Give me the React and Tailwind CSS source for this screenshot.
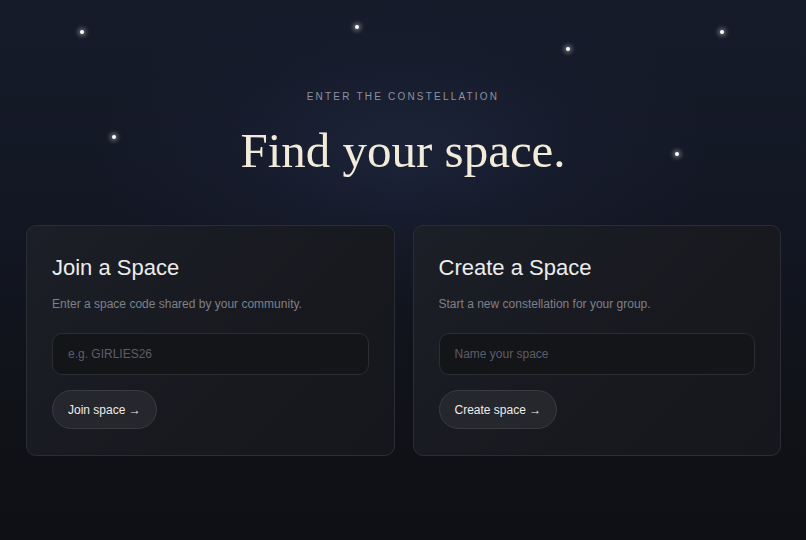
import React from "react";

const stars = [
  { x: 82, y: 32 },
  { x: 357, y: 27 },
  { x: 568, y: 49 },
  { x: 722, y: 32 },
  { x: 114, y: 137 },
  { x: 677, y: 154 },
];

function Card({ title, sub, placeholder, button }) {
  return (
    <div className="flex-1 rounded-[10px] border border-[#2a2d34] bg-[linear-gradient(135deg,#1c1f27_0%,#18191f_60%,#16171c_100%)] px-[25px] pt-[28px] pb-[26px]">
      <h2 className="text-[22px] leading-[28px] text-[#ececec] font-['Liberation_Sans',Arial,sans-serif]">
        {title}
      </h2>
      <p className="mt-[12px] text-[12px] leading-[20px] text-[#7d808a]">{sub}</p>
      <input
        className="mt-[19px] block h-[42px] w-full rounded-[10px] border border-[#2b2d33] bg-[#141519] px-[15px] text-[12px] text-[#ddd] placeholder:text-[#5b5e67] outline-none"
        placeholder={placeholder}
      />
      <button className="mt-[15px] h-[39px] rounded-full border border-[#3a3b41] bg-[#26272c] px-[15px] text-[12px] text-[#ececec]">
        {button} →
      </button>
    </div>
  );
}

export default function App() {
  return (
    <div className="relative min-h-[540px] w-full overflow-hidden bg-[linear-gradient(180deg,#151b29_0%,#131724_40%,#101218_75%,#0e1015_100%)] font-['Liberation_Sans',Arial,sans-serif]">
      <div className="pointer-events-none absolute left-1/2 top-[150px] h-[300px] w-[600px] -translate-x-1/2 -translate-y-1/2 rounded-full bg-[radial-gradient(ellipse_at_center,rgba(40,52,85,0.4)_0%,rgba(30,38,62,0.18)_45%,rgba(0,0,0,0)_75%)]" />
      {stars.map((s, i) => (
        <div
          key={i}
          className="absolute h-[4px] w-[4px] -translate-x-1/2 -translate-y-1/2 rounded-full bg-white shadow-[0_0_4px_2px_rgba(255,255,255,0.35)]"
          style={{ left: s.x, top: s.y }}
        />
      ))}
      <div className="relative flex flex-col items-center pt-[89px]">
        <div className="text-[10px] leading-4 tracking-[0.22em] text-[#8c92a1]">
          ENTER THE CONSTELLATION
        </div>
        <h1 className="mt-[16px] text-[49px] leading-[60px] text-[#f3ebd9] font-['Liberation_Serif','Times_New_Roman',serif]">
          Find your space.
        </h1>
      </div>
      <div className="relative mt-[44px] flex gap-[18px] pl-[26px] pr-[25px]">
        <Card
          title="Join a Space"
          sub="Enter a space code shared by your community."
          placeholder="e.g. GIRLIES26"
          button="Join space"
        />
        <Card
          title="Create a Space"
          sub="Start a new constellation for your group."
          placeholder="Name your space"
          button="Create space"
        />
      </div>
    </div>
  );
}
